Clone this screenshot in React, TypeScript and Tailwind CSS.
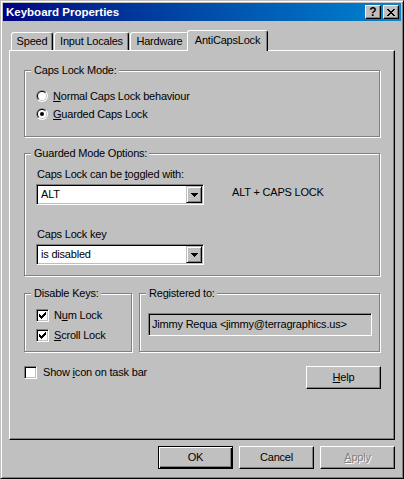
import React from 'react'

const raised = "border border-t-white border-l-white border-r-black border-b-black shadow-[inset_-1px_-1px_0_#808080]"
const sunken = "border border-t-[#808080] border-l-[#808080] border-r-white border-b-white shadow-[inset_1px_1px_0_#000,inset_-1px_-1px_0_#c0c0c0]"
const tabBase = "flex items-center justify-center bg-[#c0c0c0] border-t border-l border-r border-t-white border-l-white border-r-black shadow-[inset_-1px_0_0_#808080] rounded-t-[3px]"

type GroupProps = { label: string, className: string, children?: React.ReactNode }

const GroupBox = ({ label, className, children }: GroupProps) => (
  <div className={`relative border border-[#808080] shadow-[inset_1px_1px_0_#fff,1px_1px_0_#fff] ${className}`}>
    <span className="absolute left-[6px] top-[-7px] bg-[#c0c0c0] pl-[3px] pr-[2px] leading-[13px] whitespace-nowrap">{label}</span>
    {children}
  </div>
)

const Radio = ({ checked }: { checked?: boolean }) => (
  <svg width="12" height="12" viewBox="0 0 12 12" className="shrink-0">
    <defs>
      <clipPath id="radio-tl"><polygon points="0,0 12,0 0,12" /></clipPath>
    </defs>
    <circle cx="6" cy="6" r="6" fill="#fff" />
    <circle cx="6" cy="6" r="6" fill="#808080" clipPath="url(#radio-tl)" />
    <circle cx="6" cy="6" r="5" fill="#c0c0c0" />
    <circle cx="6" cy="6" r="5" fill="#000" clipPath="url(#radio-tl)" />
    <circle cx="6" cy="6" r="4" fill="#fff" />
    {checked && <circle cx="6" cy="6" r="2" fill="#000" />}
  </svg>
)

// classic 7x7 tick
const tick = [
  [6, 0, 1], [5, 1, 2], [0, 2, 1], [4, 2, 3], [0, 3, 2], [3, 3, 3], [0, 4, 5], [1, 5, 3], [2, 6, 1],
]

const Checkbox = ({ checked }: { checked?: boolean }) => (
  <div className={`w-[13px] h-[13px] shrink-0 bg-white ${sunken} relative`}>
    {checked && (
      <svg width="7" height="7" viewBox="0 0 7 7" className="absolute left-[2px] top-[2px]" shapeRendering="crispEdges">
        {tick.map(([x, y, w], i) => <rect key={i} x={x} y={y} width={w} height="1" fill="#000" />)}
      </svg>
    )}
  </div>
)

const DropButton = () => (
  <div className="w-[16px] h-[17px] shrink-0 bg-[#c0c0c0] flex items-center justify-center border border-t-[#c0c0c0] border-l-[#c0c0c0] border-r-black border-b-black shadow-[inset_1px_1px_0_#fff,inset_-1px_-1px_0_#808080]">
    <svg width="7" height="4" viewBox="0 0 7 4" shapeRendering="crispEdges">
      <rect x="0" y="0" width="7" height="1" fill="#000" />
      <rect x="1" y="1" width="5" height="1" fill="#000" />
      <rect x="2" y="2" width="3" height="1" fill="#000" />
      <rect x="3" y="3" width="1" height="1" fill="#000" />
    </svg>
  </div>
)

const Combo = ({ value }: { value: string }) => (
  <div className={`w-[168px] h-[21px] bg-white p-[1px] flex items-center ${sunken}`}>
    <span className="flex-1 pl-[3px] leading-[13px]">{value}</span>
    <DropButton />
  </div>
)

const closeX = [
  [0, 0, 2], [6, 0, 2], [1, 1, 2], [5, 1, 2], [2, 2, 4], [3, 3, 2], [2, 4, 4], [1, 5, 2], [5, 5, 2], [0, 6, 2], [6, 6, 2],
]

export default function App() {
  return (
    <div className="w-[404px] h-[479px] bg-[#c0c0c0] text-black font-['Liberation_Sans',Arial,sans-serif] text-[11px] tracking-[-0.2px] leading-[13px] border border-t-[#c0c0c0] border-l-[#c0c0c0] border-r-black border-b-black shadow-[inset_1px_1px_0_#fff,inset_-1px_-1px_0_#808080] p-[2px] flex flex-col select-none">
      {/* title bar */}
      <div className="h-[18px] flex items-center bg-linear-to-r from-[#000080] to-[#1084d0] pl-[3px] pr-[2px]">
        <span className="flex-1 text-white font-bold text-[11.5px] tracking-normal">Keyboard Properties</span>
        <div className={`w-[16px] h-[14px] bg-[#c0c0c0] flex items-center justify-center ${raised}`}>
          <span className="font-bold text-[12px] leading-none tracking-normal">?</span>
        </div>
        <div className={`ml-[2px] w-[16px] h-[14px] bg-[#c0c0c0] flex items-center justify-center ${raised}`}>
          <svg width="8" height="7" viewBox="0 0 8 7" shapeRendering="crispEdges" className="mr-[1px]">
            {closeX.map(([x, y, w], i) => <rect key={i} x={x} y={y} width={w} height="1" fill="#000" />)}
          </svg>
        </div>
      </div>

      <div className="px-[6px] mt-[9px]">
        {/* tabs */}
        <div className="h-[20px] flex items-end pl-[2px]">
          <div className={`${tabBase} w-[42px] h-[18px]`}>Speed</div>
          <div className={`${tabBase} w-[75px] h-[18px] ml-[1px]`}>Input Locales</div>
          <div className={`${tabBase} w-[59px] h-[18px] ml-[1px]`}>Hardware</div>
          <div className={`${tabBase} w-[81px] h-[21px] ml-[-2px] mb-[-1px] pb-[1px] relative z-10`}>AntiCapsLock</div>
        </div>

        {/* tab page */}
        <div className="w-[386px] h-[390px] border border-t-white border-l-white border-r-black border-b-black shadow-[inset_-1px_-1px_0_#808080] pt-[19px] pl-[14px] flex flex-col">
          <GroupBox label="Caps Lock Mode:" className="w-[356px] h-[67px]">
            <div className="flex flex-col gap-[2px] pt-[17px] pl-[11px]">
              <div className="h-[16px] flex items-center gap-[5px]">
                <Radio />
                <span><u>N</u>ormal Caps Lock behaviour</span>
              </div>
              <div className="h-[16px] flex items-center gap-[5px]">
                <Radio checked />
                <span><u>G</u>uarded Caps Lock</span>
              </div>
            </div>
          </GroupBox>

          <GroupBox label="Guarded Mode Options:" className="w-[356px] h-[123px] mt-[16px]">
            <div className="pl-[11px] pt-[13px] flex flex-col">
              <div className="h-[14px] flex items-center pl-[1px]">
                <span>Caps Lock can be <u>t</u>oggled with:</span>
              </div>
              <div className="mt-[3px] flex items-center">
                <Combo value="ALT" />
                <span className="ml-[28px] mb-[5px]">ALT + CAPS LOCK</span>
              </div>
              <div className="mt-[22px] h-[14px] flex items-center pl-[1px]">
                <span>Caps Lock key</span>
              </div>
              <div className="mt-[3px]">
                <Combo value="is disabled" />
              </div>
            </div>
          </GroupBox>

          <div className="mt-[17px] flex gap-[7px]">
            <GroupBox label="Disable Keys:" className="w-[108px] h-[59px]">
              <div className="pl-[11px] pt-[15px] flex flex-col gap-[7px]">
                <div className="h-[13px] flex items-center gap-[5px]">
                  <Checkbox checked />
                  <span>N<u>u</u>m Lock</span>
                </div>
                <div className="h-[13px] flex items-center gap-[5px]">
                  <Checkbox checked />
                  <span><u>S</u>croll Lock</span>
                </div>
              </div>
            </GroupBox>
            <GroupBox label="Registered to:" className="w-[241px] h-[59px]">
              <div className="pl-[8px] pt-[19px]">
                <div className={`w-[224px] h-[23px] bg-[#c0c0c0] flex items-center pl-[3px] ${sunken}`}>
                  Jimmy Requa &lt;jimmy@terragraphics.us&gt;
                </div>
              </div>
            </GroupBox>
          </div>

          <div className="mt-[14px] w-[357px] flex items-start justify-between">
            <div className="h-[13px] flex items-center gap-[6px]">
              <Checkbox />
              <span>Show <u>i</u>con on task bar</span>
            </div>
            <div className={`w-[75px] h-[23px] bg-[#c0c0c0] flex items-center justify-center ${raised}`}>
              <span><u>H</u>elp</span>
            </div>
          </div>
        </div>
      </div>

      {/* dialog buttons */}
      <div className="mt-[6px] pr-[6px] flex justify-end gap-[6px]">
        <div className="w-[75px] h-[23px] bg-[#c0c0c0] flex items-center justify-center border border-black shadow-[inset_1px_1px_0_#fff,inset_-1px_-1px_0_#000,inset_-2px_-2px_0_#808080]">
          <span>OK</span>
        </div>
        <div className={`w-[75px] h-[23px] bg-[#c0c0c0] flex items-center justify-center ${raised}`}>
          <span>Cancel</span>
        </div>
        <div className={`w-[75px] h-[23px] bg-[#c0c0c0] flex items-center justify-center ${raised}`}>
          <span className="text-[#808080] [text-shadow:1px_1px_0_#fff]"><u>A</u>pply</span>
        </div>
      </div>
    </div>
  )
}
